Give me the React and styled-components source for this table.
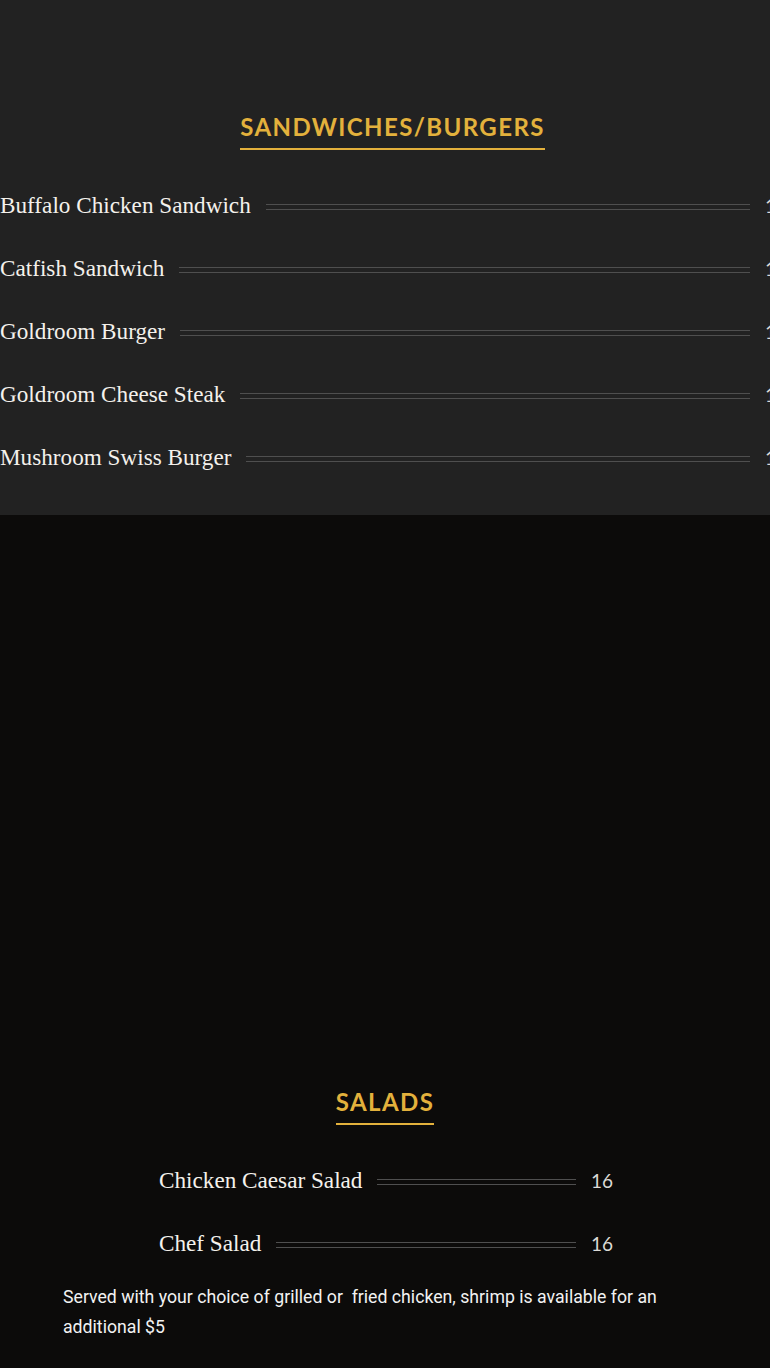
import React from "react";
import styled, { createGlobalStyle } from "styled-components";

const Global = createGlobalStyle`
  html, body { margin: 0; padding: 0; background: #0c0b0a; overflow-x: hidden; }
  #root { width: 770px; overflow: hidden; }
`;

const Section = styled.section`
  background: ${(p) => p.$bg};
  padding: ${(p) => p.$pad};
  overflow: hidden;
`;

const Inner = styled.div`
  width: ${(p) => p.$w}px;
  margin-left: ${(p) => p.$ml};
  box-sizing: border-box;
`;

const HeadingWrap = styled.div`
  display: flex;
  justify-content: center;
  margin-bottom: ${(p) => p.$mb}px;
`;

const Heading = styled.h2`
  margin: 0;
  font-family: "Lato", "Open Sans", sans-serif;
  font-weight: 700;
  font-size: 24px;
  letter-spacing: 1.4px;
  line-height: 28px;
  color: #e3b13c;
  padding-bottom: 7px;
  border-bottom: 2px solid #e3b13c;
`;

const Row = styled.div`
  display: flex;
  align-items: center;
  height: 63px;
`;

const Name = styled.span`
  font-family: "Liberation Serif", serif;
  font-size: 23.2px;
  color: #f4f1ec;
  white-space: nowrap;
`;

const Leader = styled.span`
  flex: 1;
  height: 4px;
  margin: 0 15px;
  border-top: 1px solid #4f4f4f;
  border-bottom: 1px solid #4f4f4f;
  position: relative;
  top: 1px;
`;

const Price = styled.span`
  font-family: "Lato", sans-serif;
  font-weight: 400;
  font-size: 19px;
  color: #dcdad6;
  width: 20px;
`;

const Note = styled.p`
  margin: 0;
  padding: 7px 63px 0;
  font-family: Roboto, sans-serif;
  font-size: 17.7px;
  line-height: 30px;
  color: #f2f2f2;
`;

const sandwiches = [
  ["Buffalo Chicken Sandwich", "16"],
  ["Catfish Sandwich", "16"],
  ["Goldroom Burger", "16"],
  ["Goldroom Cheese Steak", "16"],
  ["Mushroom Swiss Burger", "16"],
];

const salads = [
  ["Chicken Caesar Salad", "16"],
  ["Chef Salad", "16"],
];

function Item({ name, price }) {
  return (
    <Row>
      <Name>{name}</Name>
      <Leader />
      <Price>{price}</Price>
    </Row>
  );
}

export default function App() {
  return (
    <>
      <Global />
      <Section $bg="#222222" $pad="113px 0 26px">
        <Inner $w={785} $ml="0">
          <HeadingWrap $mb={24}>
            <Heading>SANDWICHES/BURGERS</Heading>
          </HeadingWrap>
          {sandwiches.map(([n, p]) => (
            <Item key={n} name={n} price={p} />
          ))}
        </Inner>
      </Section>
      <Section $bg="#0c0b0a" $pad="573px 0 30px">
        <Inner $w={452} $ml="159px">
          <HeadingWrap $mb={24}>
            <Heading>SALADS</Heading>
          </HeadingWrap>
          {salads.map(([n, p]) => (
            <Item key={n} name={n} price={p} />
          ))}
        </Inner>
        <Note>
          Served with your choice of grilled or{"\u00a0"} fried chicken, shrimp is available for an additional $5
        </Note>
      </Section>
    </>
  );
}
